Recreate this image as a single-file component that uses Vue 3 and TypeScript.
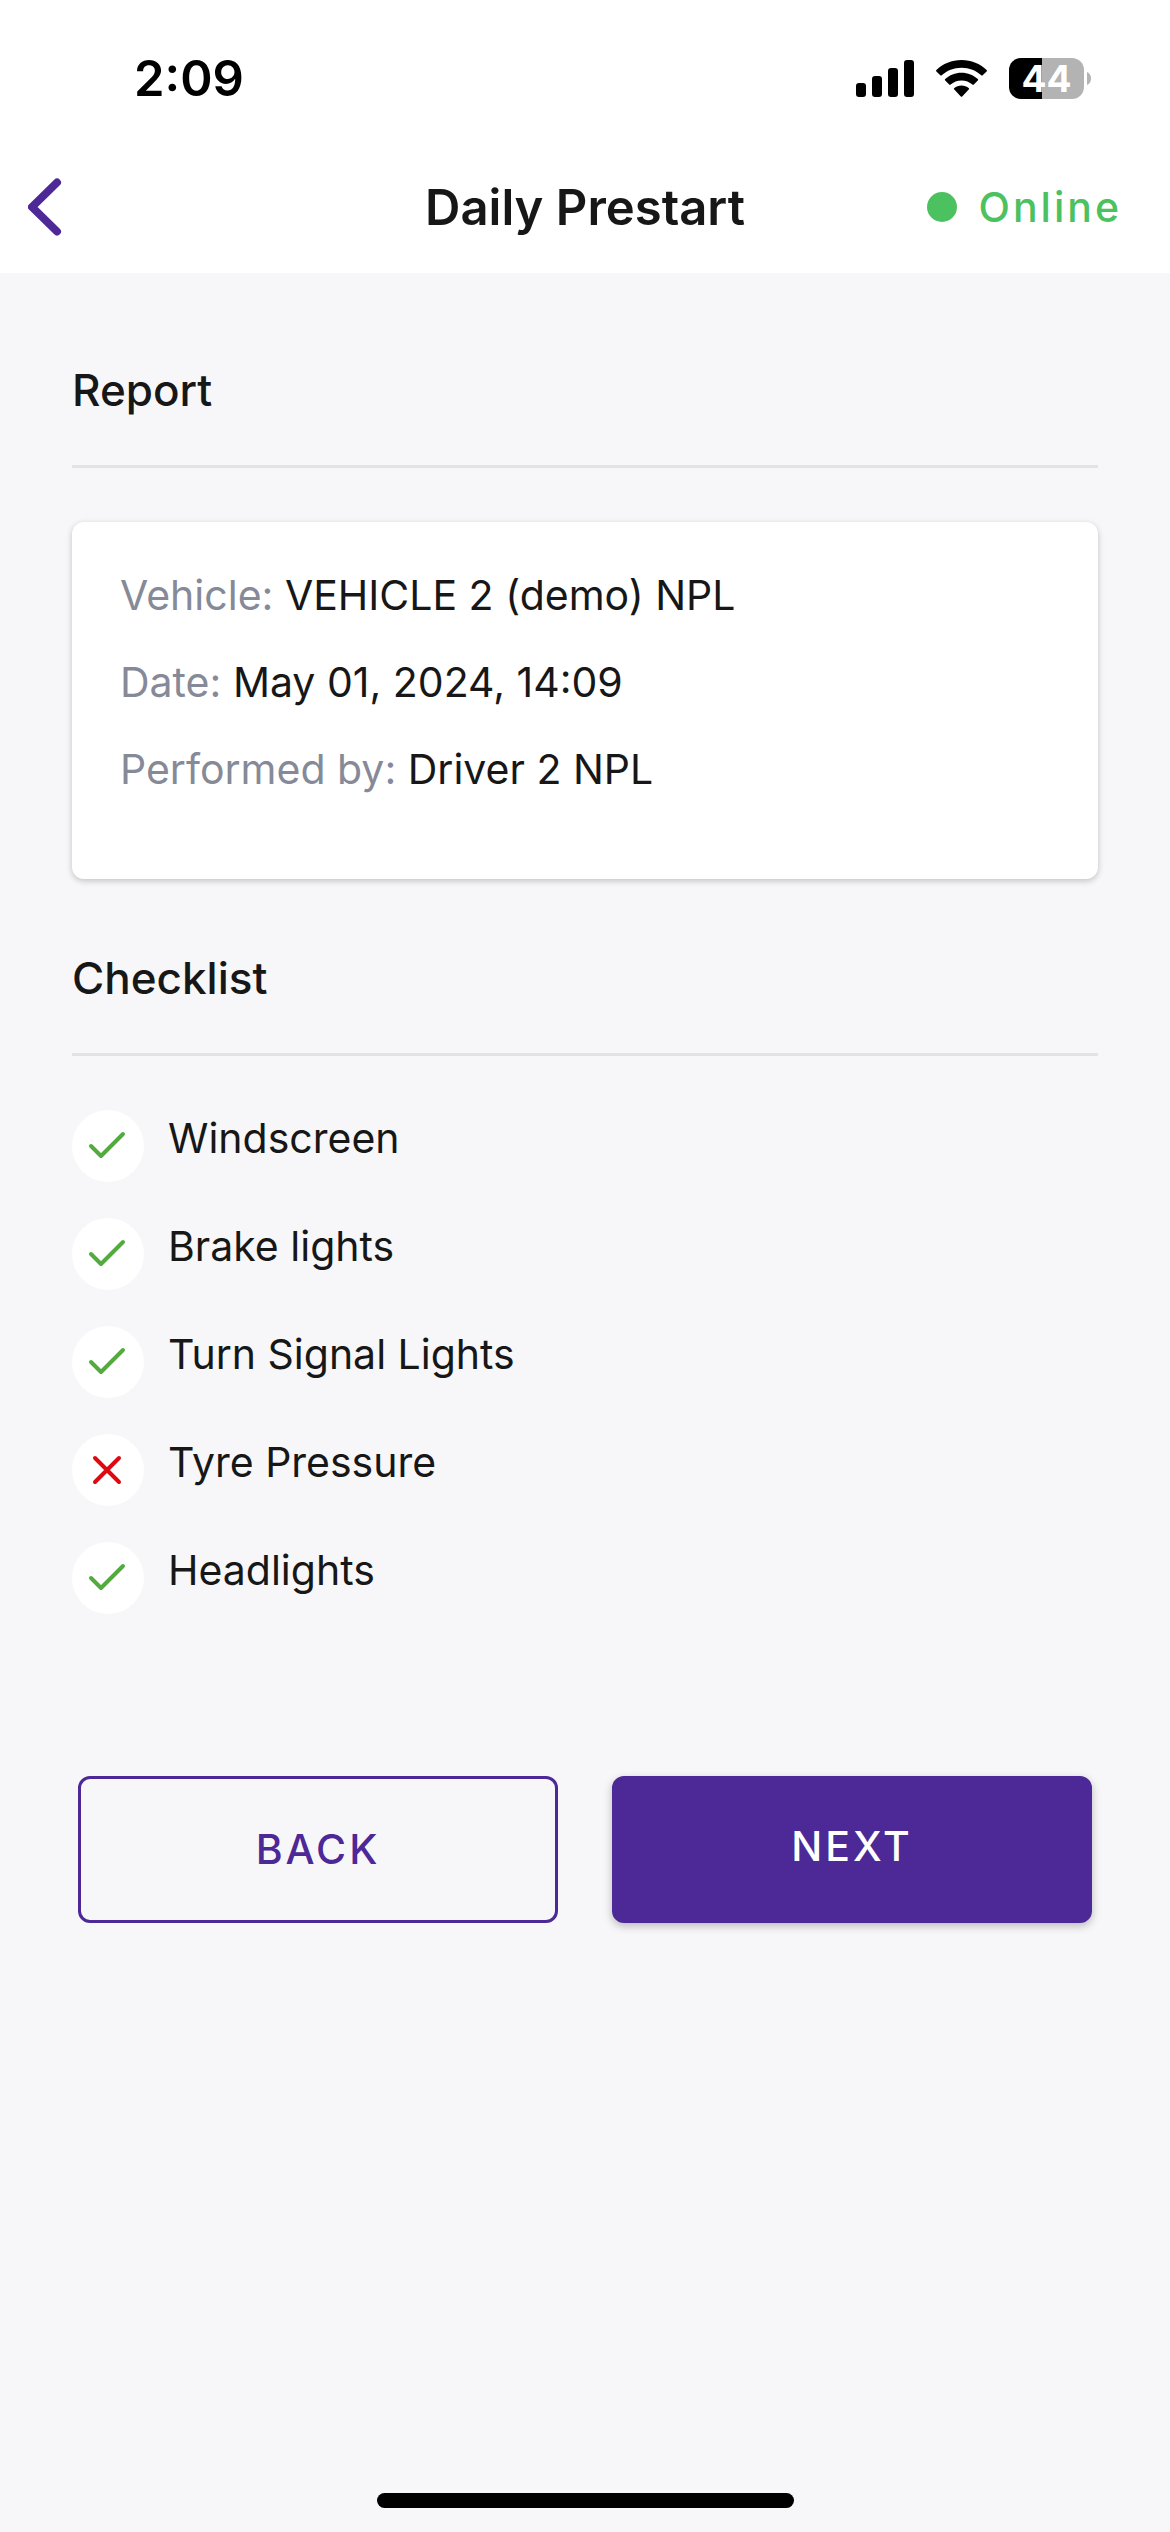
<script setup lang="ts">
interface Detail {
  label: string
  value: string
}

interface CheckItem {
  name: string
  passed: boolean
}

const details: Detail[] = [
  { label: 'Vehicle:', value: 'VEHICLE 2 (demo) NPL' },
  { label: 'Date:', value: 'May 01, 2024, 14:09' },
  { label: 'Performed by:', value: 'Driver 2 NPL' },
]

const checklist: CheckItem[] = [
  { name: 'Windscreen', passed: true },
  { name: 'Brake lights', passed: true },
  { name: 'Turn Signal Lights', passed: true },
  { name: 'Tyre Pressure', passed: false },
  { name: 'Headlights', passed: true },
]
</script>

<template>
  <div class="screen">
    <header class="top">
      <div class="status-bar">
        <time class="clock">2:09</time>
        <div class="indicators">
          <svg class="signal" width="58" height="37" viewBox="0 0 58 37" aria-hidden="true">
            <rect x="0" y="23" width="10" height="14" rx="3" />
            <rect x="16" y="16" width="10" height="21" rx="3" />
            <rect x="32" y="8" width="10" height="29" rx="3" />
            <rect x="48" y="0" width="10" height="37" rx="3" />
          </svg>
          <svg class="wifi" width="51" height="37" viewBox="0 0 51 37" aria-hidden="true">
            <path d="M25.5 0C35.3 0 44.2 3.8 50.6 10a1 1 0 0 1 0 1.400l-3.900 3.900a1 1 0 0 1-1.400 0C40.200 10.500 33.200 7.700 25.500 7.700S10.800 10.500 5.700 15.300a1 1 0 0 1-1.400 0L.4 11.400a1 1 0 0 1 0-1.400C6.800 3.800 15.700 0 25.500 0Z" />
            <path d="M25.500 12.800c6.300 0 12 2.400 16.300 6.300a1 1 0 0 1 0 1.500l-4 4a1 1 0 0 1-1.400 0c-2.900-2.500-6.700-4.100-10.900-4.100s-8 1.600-10.900 4.100a1 1 0 0 1-1.400 0l-4-4a1 1 0 0 1 0-1.500c4.300-3.900 10-6.300 16.300-6.300Z" />
            <path d="M25.500 25.500c2.800 0 5.300 1 7.200 2.600a1 1 0 0 1 0 1.500l-6.500 6.900a1 1 0 0 1-1.400 0l-6.500-6.900a1 1 0 0 1 0-1.500c1.900-1.600 4.400-2.600 7.200-2.600Z" />
          </svg>
          <div class="battery">
            <span class="battery-body">44</span>
            <svg width="4" height="13" viewBox="0 0 4 13" aria-hidden="true">
              <path d="M0 0C2.500 1 4 3.500 4 6.500S2.500 12 0 13Z" fill="#b3b3b3" />
            </svg>
          </div>
        </div>
      </div>
      <nav class="nav-bar">
        <button class="nav-back" type="button" aria-label="Go back">
          <svg width="34" height="58" viewBox="0 0 34 58" aria-hidden="true">
            <path d="M29 4.500 4 29 29 53.500" fill="none" stroke="#4d2897" stroke-width="8" stroke-linecap="round" stroke-linejoin="round" />
          </svg>
        </button>
        <h1 class="title">Daily Prestart</h1>
        <div class="connection"><span class="dot"></span>Online</div>
      </nav>
    </header>

    <main class="content">
      <section>
        <h2 class="section-title">Report</h2>
        <div class="card">
          <p v-for="detail in details" :key="detail.label" class="detail">
            <span class="detail-label">{{ detail.label }}</span> {{ detail.value }}
          </p>
        </div>
      </section>

      <section class="checks">
        <h2 class="section-title">Checklist</h2>
        <ul class="checklist">
          <li v-for="item in checklist" :key="item.name" class="check">
            <span class="badge">
              <svg v-if="item.passed" width="72" height="72" viewBox="0 0 72 72" role="img" aria-label="Passed">
                <path d="M19 36 29 46 51 24" fill="none" stroke="#53ab40" stroke-width="4" stroke-linecap="round" stroke-linejoin="round" />
              </svg>
              <svg v-else width="72" height="72" viewBox="0 0 72 72" role="img" aria-label="Failed">
                <path d="M23 24 47 48M47 24 23 48" fill="none" stroke="#de0a11" stroke-width="4" stroke-linecap="round" />
              </svg>
            </span>
            <span>{{ item.name }}</span>
          </li>
        </ul>
      </section>

      <div class="actions">
        <button class="action action-outline" type="button">BACK</button>
        <button class="action action-primary" type="button">NEXT</button>
      </div>
    </main>

    <div class="home-indicator"></div>
  </div>
</template>

<style>
body {
  margin: 0;
  background: #f7f7f9;
}
</style>

<style scoped>
.screen {
  display: flex;
  flex-direction: column;
  min-height: 100vh;
  box-sizing: border-box;
  background: #f7f7f9;
  color: #171717;
  font-family: Inter, "Liberation Sans", sans-serif;
  font-size: 41px;
  line-height: 57px;
}

.top {
  background: #fff;
}

.status-bar {
  display: flex;
  align-items: center;
  justify-content: space-between;
  height: 141px;
  padding: 15px 79px 0 134px;
  box-sizing: border-box;
  color: #000;
}

.clock {
  font-size: 49px;
  font-weight: 600;
}

.indicators {
  display: flex;
  align-items: center;
  gap: 22px;
}

.battery {
  display: flex;
  align-items: center;
  gap: 3px;
}

.battery-body {
  width: 75px;
  height: 41px;
  border-radius: 12px;
  background: linear-gradient(to right, #000 44%, #b3b3b3 44%);
  color: #fff;
  font-size: 37px;
  font-weight: 700;
  line-height: 41px;
  text-align: center;
}

.nav-bar {
  display: grid;
  grid-template-columns: 1fr auto 1fr;
  align-items: center;
  height: 132px;
  padding: 0 28px;
}

.nav-back {
  display: flex;
  justify-self: start;
  padding: 0;
  border: 0;
  background: none;
  cursor: pointer;
}

.title {
  margin: 0;
  font-size: 49px;
  font-weight: 600;
}

.connection {
  display: flex;
  align-items: center;
  justify-self: end;
  gap: 21px;
  padding-right: 20px;
  color: #4cc15f;
  font-weight: 500;
  letter-spacing: 3px;
}

.dot {
  width: 30px;
  height: 30px;
  border-radius: 50%;
  background: #4cc15f;
}

.content {
  flex: 1;
  padding: 87px 72px 0;
}

.section-title {
  margin: 0 0 54px;
  padding-bottom: 45px;
  border-bottom: 3px solid #e3e3e4;
  font-size: 44px;
  font-weight: 500;
  line-height: 60px;
}

.card {
  padding: 45px 48px 51px;
  border-radius: 12px;
  background: #fff;
  box-shadow: 0 2px 6px rgba(0, 0, 0, 0.22);
}

.detail {
  margin: 0 0 30px;
}

.detail-label {
  color: #868a98;
}

.checks {
  margin-top: 69px;
}

.checklist {
  display: flex;
  flex-direction: column;
  gap: 36px;
  margin: 0;
  padding: 0;
  list-style: none;
}

.check {
  display: flex;
  align-items: flex-start;
  gap: 24px;
}

.badge {
  display: flex;
  border-radius: 50%;
  background: #fff;
}

.actions {
  display: flex;
  gap: 54px;
  margin: 162px 6px 0;
}

.action {
  flex: 1;
  height: 147px;
  padding: 0;
  border: 3px solid #4d2897;
  border-radius: 12px;
  font: inherit;
  font-weight: 500;
  letter-spacing: 3px;
  cursor: pointer;
}

.action-outline {
  background: transparent;
  color: #4d2897;
}

.action-primary {
  padding-bottom: 6px;
  background: #4d2897;
  color: #fff;
  box-shadow: 0 3px 9px rgba(0, 0, 0, 0.25);
}

.home-indicator {
  align-self: center;
  width: 417px;
  height: 15px;
  margin: 24px 0;
  border-radius: 8px;
  background: #000;
}
</style>
